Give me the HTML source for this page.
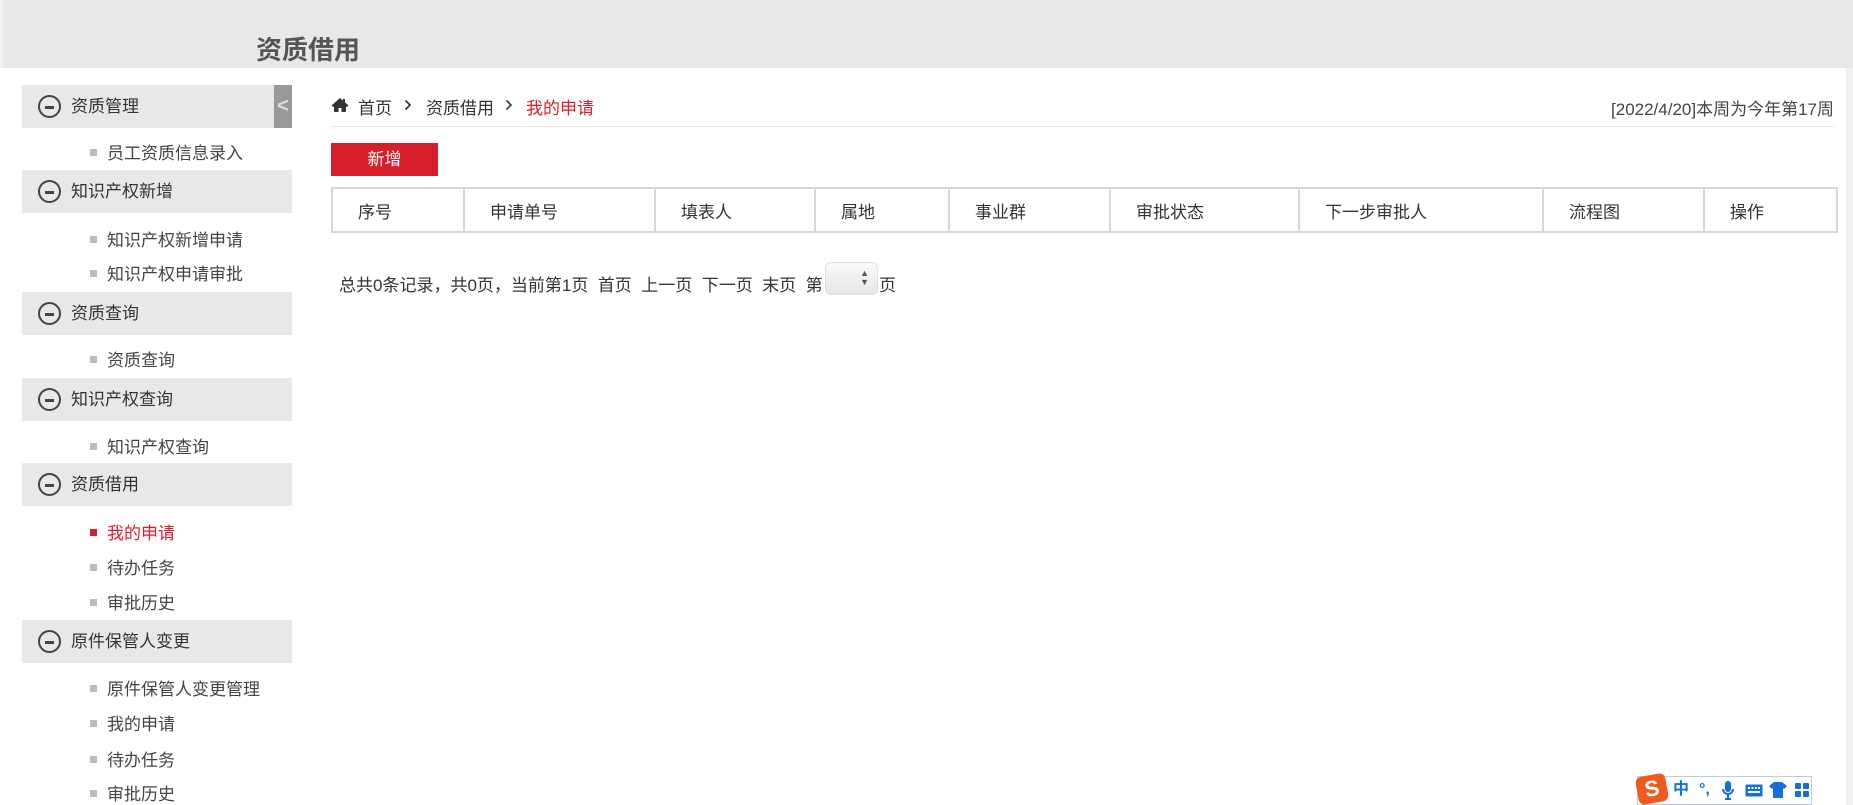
<!DOCTYPE html>
<html><head><meta charset="utf-8"><style>
*{margin:0;padding:0;box-sizing:border-box}
body{width:1853px;height:805px;overflow:hidden;background:#fff;font-family:"Liberation Sans","Noto Sans CJK SC",sans-serif;color:#333;position:relative}
.a{position:absolute;white-space:nowrap}
.hdr{left:0;top:0;width:1853px;height:68px;background:#e8e8e8;border-left:3px solid #f4f4f4}
.title{left:256px;top:30px;font-size:26px;font-weight:bold;color:#555}
.scroll{left:1846px;top:68px;width:7px;height:737px;background:#f0f0f0}
.sec{left:22px;width:270px;height:43px;background:#e8e8e8;font-size:17px;line-height:43px;padding-left:49px;color:#333}
.sec i{position:absolute;left:16px;top:10px;width:23px;height:23px;border:2px solid #444;border-radius:50%}
.sec i:after{content:"";position:absolute;left:5px;top:8.5px;width:9px;height:3px;background:#444}
.it{left:90px;font-size:17px;line-height:20px;color:#444}
.it:before{content:"";display:inline-block;width:7px;height:7px;background:#bbb;margin-right:10px;vertical-align:3px}
.it.on{color:#d71f2b}.it.on:before{background:#d71f2b}
.tab{left:274px;top:85px;width:18px;height:43px;background:#999;color:#ddd;font-weight:bold;font-size:20px;line-height:42px;text-align:center}
table{position:absolute;left:331px;top:187px;width:1507px;height:46px;border-collapse:collapse}
td{border:2px solid #d8d8d8;font-size:17px;padding-left:25px;color:#333}
.sg{position:absolute;top:781px;color:#1470d8;font-weight:bold;font-size:16px;line-height:18px}
</style></head><body>
<div class="a hdr"></div>
<div class="a title">资质借用</div>
<div class="a scroll"></div>

<div class="a sec" style="top:85px"><i></i>资质管理</div>
<div class="a tab">&lt;</div>
<div class="a it" style="top:144px">员工资质信息录入</div>
<div class="a sec" style="top:170px"><i></i>知识产权新增</div>
<div class="a it" style="top:231px">知识产权新增申请</div>
<div class="a it" style="top:265px">知识产权申请审批</div>
<div class="a sec" style="top:292px"><i></i>资质查询</div>
<div class="a it" style="top:351px">资质查询</div>
<div class="a sec" style="top:378px"><i></i>知识产权查询</div>
<div class="a it" style="top:438px">知识产权查询</div>
<div class="a sec" style="top:463px"><i></i>资质借用</div>
<div class="a it on" style="top:524px">我的申请</div>
<div class="a it" style="top:559px">待办任务</div>
<div class="a it" style="top:594px">审批历史</div>
<div class="a sec" style="top:620px"><i></i>原件保管人变更</div>
<div class="a it" style="top:680px">原件保管人变更管理</div>
<div class="a it" style="top:715px">我的申请</div>
<div class="a it" style="top:751px">待办任务</div>
<div class="a it" style="top:785px">审批历史</div>

<svg class="a" style="left:331px;top:97px" width="18" height="16" viewBox="0 0 18 16"><path d="M9 1L0.5 8.5 2 10 3 9.2V15H7.5V11H10.5V15H15V9.2L16 10 17.5 8.5 14 5.4V2H12V3.6Z" fill="#333"/></svg>
<div class="a" style="left:358px;top:94px;font-size:17px;color:#333">首页</div>
<svg class="a" style="left:404px;top:99px" width="8" height="12" viewBox="0 0 8 12"><path d="M1.5 1.5L6 6 1.5 10.5" stroke="#333" stroke-width="1.6" fill="none"/></svg>
<div class="a" style="left:426px;top:94px;font-size:17px;color:#333">资质借用</div>
<svg class="a" style="left:505px;top:99px" width="8" height="12" viewBox="0 0 8 12"><path d="M1.5 1.5L6 6 1.5 10.5" stroke="#333" stroke-width="1.6" fill="none"/></svg>
<div class="a" style="left:526px;top:94px;font-size:17px;color:#d71f2b">我的申请</div>
<div class="a" style="right:19px;top:95px;font-size:17px;color:#444">[2022/4/20]本周为今年第17周</div>
<div class="a" style="left:331px;top:126px;width:1503px;border-top:1px dotted #ccc"></div>
<div class="a" style="left:331px;top:143px;width:107px;height:33px;background:#d71f2b;color:#fff;font-size:17px;line-height:33px;text-align:center">新增</div>
<table><tr>
<td style="width:132px">序号</td><td style="width:191px">申请单号</td><td style="width:160px">填表人</td><td style="width:134px">属地</td><td style="width:161px">事业群</td><td style="width:189px">审批状态</td><td style="width:244px">下一步审批人</td><td style="width:161px">流程图</td><td>操作</td>
</tr></table>
<div class="a" style="left:339px;top:276px;font-size:17px;color:#333;line-height:20px">总共0条记录，共0页，当前第1页&nbsp; 首页&nbsp; 上一页&nbsp; 下一页&nbsp; 末页&nbsp; 第</div>
<div class="a" style="left:825px;top:262px;width:53px;height:33px;border:1px solid #ddd;border-radius:6px;background:linear-gradient(#fafafa,#e6e6e6)"><span class="a" style="right:8px;top:6px;font-size:9px;line-height:9px;color:#555">▲<br>▼</span></div>
<div class="a" style="left:879px;top:276px;font-size:17px;line-height:20px">页</div>

<div class="a" style="left:1637px;top:776px;width:175px;height:29px;border:1px solid #b9cde6;background:#fff"></div>
<div class="a" style="left:1637px;top:775px;width:30px;height:28px;background:#f05a1a;border-radius:6px;transform:rotate(-10deg);color:#fff;font-weight:bold;font-size:22px;line-height:28px;text-align:center">S</div>
<div class="sg" style="left:1673px">中</div>
<div class="sg" style="left:1699px">°,</div>
<svg class="a" style="left:1722px;top:781px" width="12" height="20" viewBox="0 0 12 20"><rect x="3" y="0" width="6" height="11" rx="3" fill="#1470d8"/><path d="M1 8a5 5 0 0 0 10 0M6 13v4M3 18h6" stroke="#1470d8" stroke-width="2" fill="none"/></svg>
<svg class="a" style="left:1745px;top:784px" width="18" height="13" viewBox="0 0 18 13"><rect x="0.5" y="0.5" width="17" height="12" rx="1" fill="#1470d8"/><g fill="#fff"><rect x="3" y="3" width="2" height="2"/><rect x="6.5" y="3" width="2" height="2"/><rect x="10" y="3" width="2" height="2"/><rect x="13" y="3" width="2" height="2"/><rect x="3" y="7" width="12" height="2"/></g></svg>
<svg class="a" style="left:1769px;top:782px" width="18" height="16" viewBox="0 0 18 16"><path d="M5 0H13L18 4 15 7 14 6V16H4V6L3 7 0 4Z" fill="#1470d8"/></svg>
<svg class="a" style="left:1795px;top:783px" width="14" height="14" viewBox="0 0 14 14"><g fill="#1470d8"><rect width="6" height="6" rx="1"/><rect x="8" width="6" height="6" rx="1"/><rect y="8" width="6" height="6" rx="1"/><rect x="8" y="8" width="6" height="6" rx="1"/></g></svg>
</body></html>
